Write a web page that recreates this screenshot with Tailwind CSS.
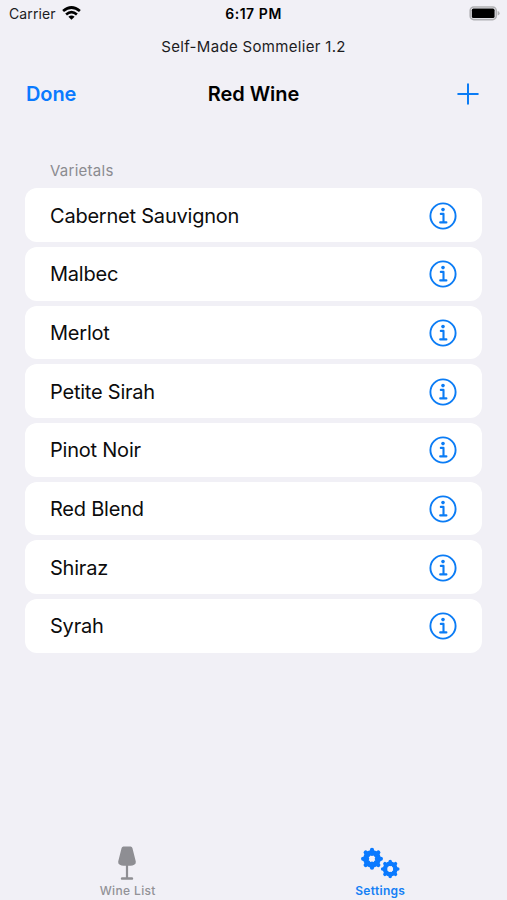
<!DOCTYPE html>
<html lang="en">
<head>
<meta charset="utf-8">
<title>Red Wine</title>
<script src="https://cdn.jsdelivr.net/npm/@tailwindcss/browser@4"></script>
</head>
<body class="bg-[#f1f0f6]">
<svg class="hidden">
  <symbol id="info" viewBox="0 0 28 28">
    <circle cx="14" cy="14" r="12.6" fill="none" stroke="#0b7cf5" stroke-width="1.9"/>
    <circle cx="14" cy="7.6" r="1.8" fill="#0b7cf5"/>
    <path d="M11.8 11.9H14.5V20.4M11.2 20.4H17.4" fill="none" stroke="#0b7cf5" stroke-width="2.1" stroke-linecap="round" stroke-linejoin="round"/>
  </symbol>
</svg>
<div class="w-[507px] h-[900px] flex flex-col overflow-hidden font-['Inter',sans-serif] text-black">
  <div class="h-7 grid grid-cols-3 items-center pl-[9px] pr-[7px] text-[14px] leading-7">
    <div class="flex items-center gap-[6px] text-[#1c1c1e]">
      <span class="tracking-[0.1px]">Carrier</span>
      <svg class="w-[19px] h-[14px] -mt-[2px]" viewBox="0 0 19 14" fill="none" stroke="#000" stroke-width="2.7">
        <path d="M1.1 5.1Q9.5 -2.1 17.9 5.1M4.1 8.5Q9.5 3.9 14.9 8.5"/>
        <path d="M6.4 10.7Q9.5 8.3 12.6 10.7L9.5 13.8Z" fill="#000" stroke="none"/>
      </svg>
    </div>
    <div class="text-center font-semibold tracking-[0.55px] -ml-[2px]">6:17 PM</div>
    <svg class="w-[31px] h-[15px] justify-self-end -mt-[2px]" viewBox="0 0 31 15">
      <rect x="1.2" y="1" width="26" height="12.6" rx="3.6" fill="#f1f0f6" stroke="#b0b0b3" stroke-width="1.6"/>
      <rect x="2.8" y="2.6" width="22.8" height="9.4" rx="1.6" fill="#000"/>
      <path d="M28.6 5V9.6Q30.6 9 30.6 7.3T28.6 5Z" fill="#b0b0b3"/>
    </svg>
  </div>
  <div class="h-[38px] text-center text-[15px] leading-[38px] text-[#1c1c1e] tracking-[0.32px]">Self-Made Sommelier 1.2</div>
  <div class="h-14 grid grid-cols-3 items-center pl-[26px] pr-[28px] text-[20px] font-semibold">
    <span class="text-[#0a7aff] tracking-[-0.1px]">Done</span>
    <span class="text-center ml-[2px] tracking-[-0.05px]">Red Wine</span>
    <svg class="w-[22px] h-[22px] justify-self-end" viewBox="0 0 22 22" stroke="#0b7cf5" stroke-width="2" stroke-linecap="round"><path d="M1.2 11H20.8M11 1.2V20.8"/></svg>
  </div>
  <div class="h-[66.3px] pl-[50px] pt-[38px] text-[15px] leading-[22px] text-[#8b8b90] tracking-[0.26px]">Varietals</div>
  <div class="mx-[25px] flex flex-col gap-[4.8px] text-[20px] text-[#0c0c0d] tracking-[-0.22px]">
    <div class="h-[53.87px] px-[25px] pt-px bg-white rounded-[12px] flex items-center justify-between"><span>Cabernet Sauvignon</span><svg class="size-7"><use href="#info"/></svg></div>
    <div class="h-[53.87px] px-[25px] pt-px bg-white rounded-[12px] flex items-center justify-between"><span>Malbec</span><svg class="size-7"><use href="#info"/></svg></div>
    <div class="h-[53.87px] px-[25px] pt-px bg-white rounded-[12px] flex items-center justify-between"><span>Merlot</span><svg class="size-7"><use href="#info"/></svg></div>
    <div class="h-[53.87px] px-[25px] pt-px bg-white rounded-[12px] flex items-center justify-between"><span>Petite Sirah</span><svg class="size-7"><use href="#info"/></svg></div>
    <div class="h-[53.87px] px-[25px] pt-px bg-white rounded-[12px] flex items-center justify-between"><span>Pinot Noir</span><svg class="size-7"><use href="#info"/></svg></div>
    <div class="h-[53.87px] px-[25px] pt-px bg-white rounded-[12px] flex items-center justify-between"><span>Red Blend</span><svg class="size-7"><use href="#info"/></svg></div>
    <div class="h-[53.87px] px-[25px] pt-px bg-white rounded-[12px] flex items-center justify-between"><span>Shiraz</span><svg class="size-7"><use href="#info"/></svg></div>
    <div class="h-[53.87px] px-[25px] pt-px bg-white rounded-[12px] flex items-center justify-between"><span>Syrah</span><svg class="size-7"><use href="#info"/></svg></div>
  </div>
  <div class="mt-auto h-[56px] grid grid-cols-2 text-[12px] leading-4 font-medium">
    <div class="flex flex-col items-center text-[#929297]">
      <svg class="w-5 h-[39px]" viewBox="0 0 20 39" fill="#8e8e93">
        <path d="M6.4 2.5H13.6Q15 2.5 15.4 4L18.8 17.6Q19.2 19.8 17.2 20.8Q15.5 21.8 13.5 21.8H6.5Q4.5 21.8 2.8 20.8Q0.8 19.8 1.2 17.6L4.6 4Q5 2.5 6.4 2.5Z"/>
        <path d="M8.9 21H11.1V33.3H15.2Q16.2 33.4 16.2 34.6T15.2 35.8H4.8Q3.8 35.8 3.8 34.6T4.8 33.3H8.9Z"/>
      </svg>
      <span class="tracking-[0.35px] ml-[2px]">Wine List</span>
    </div>
    <div class="flex flex-col items-center text-[#1580f5]">
      <svg class="w-10 h-[39px]" viewBox="0 0 40 39" fill="none" stroke="#0a7aff" stroke-linecap="round">
        <circle cx="12" cy="14.8" r="6.4" stroke-width="5"/>
        <path stroke-width="4.2" d="M12 10V5.9M12 19.6V23.7M7.2 14.8H3.1M16.8 14.8H20.9M8.3 11.1L5.7 8.5M15.7 11.1L18.3 8.5M8.3 18.5L5.7 21.1M15.7 18.5L18.3 21.1"/>
        <circle cx="30.2" cy="25" r="5.3" stroke-width="4.2"/>
        <path stroke-width="3.5" d="M30.2 20.5V17.4M30.2 29.5V32.6M25.7 25H22.6M34.7 25H37.8M26.9 21.7L24.9 19.7M33.5 21.7L35.5 19.7M26.9 28.3L24.9 30.3M33.5 28.3L35.5 30.3"/>
      </svg>
      <span class="font-semibold tracking-[0.3px]">Settings</span>
    </div>
  </div>
</div>
</body>
</html>
